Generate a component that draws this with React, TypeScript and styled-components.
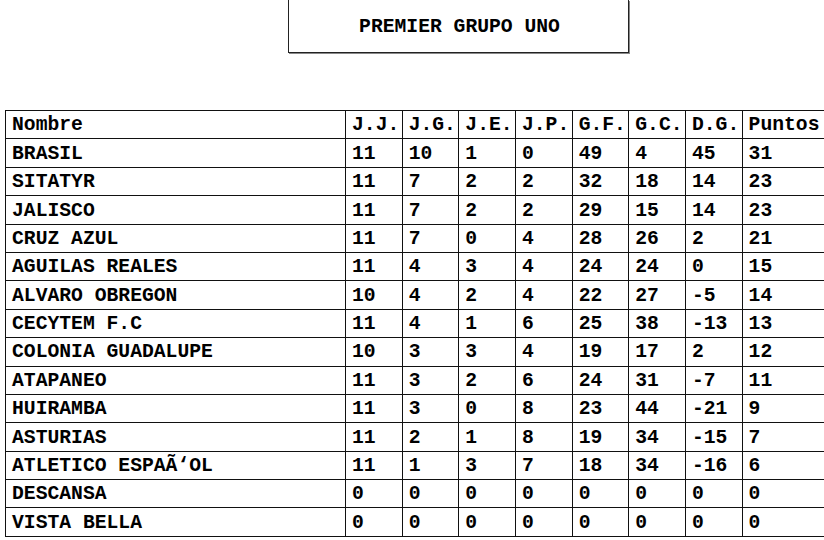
import React from "react";
import styled, { createGlobalStyle } from "styled-components";

const GlobalStyle = createGlobalStyle`
  html, body {
    margin: 0;
    padding: 0;
    background: #fff;
    overflow: hidden;
  }
  body {
    font-family: "Liberation Mono", "Courier New", monospace;
    color: #000;
  }
`;

const Page = styled.div`
  width: 824px;
  height: 540px;
  overflow: hidden;
`;

const TitleBox = styled.div`
  margin-left: 288px;
  width: 337px;
  height: 50px;
  padding: 2px 0 0 2px;
  border: 1px solid #222;
  border-top: none;
  box-shadow: 1px 1px 0 #888;
  display: flex;
  align-items: center;
  justify-content: center;
  font-weight: bold;
  font-size: 19.7px;
`;

const Table = styled.table`
  margin-top: 57px;
  margin-left: 5px;
  border-collapse: collapse;
  table-layout: fixed;
  width: 887px;
  font-size: 19.7px;
  font-weight: bold;
`;

const Cell = styled.td`
  border: 1px solid #111;
  height: 24.4px;
  padding: 3px 0 0 6px;
  white-space: nowrap;
  overflow: hidden;
  text-align: left;
  vertical-align: middle;
  line-height: 1;
  font-weight: bold;
`;

const columns = ["J.J.", "J.G.", "J.E.", "J.P.", "G.F.", "G.C.", "D.G.", "Puntos"];

type Team = [string, number, number, number, number, number, number, number, number];

const teams: Team[] = [
  ["BRASIL", 11, 10, 1, 0, 49, 4, 45, 31],
  ["SITATYR", 11, 7, 2, 2, 32, 18, 14, 23],
  ["JALISCO", 11, 7, 2, 2, 29, 15, 14, 23],
  ["CRUZ AZUL", 11, 7, 0, 4, 28, 26, 2, 21],
  ["AGUILAS REALES", 11, 4, 3, 4, 24, 24, 0, 15],
  ["ALVARO OBREGON", 10, 4, 2, 4, 22, 27, -5, 14],
  ["CECYTEM F.C", 11, 4, 1, 6, 25, 38, -13, 13],
  ["COLONIA GUADALUPE", 10, 3, 3, 4, 19, 17, 2, 12],
  ["ATAPANEO", 11, 3, 2, 6, 24, 31, -7, 11],
  ["HUIRAMBA", 11, 3, 0, 8, 23, 44, -21, 9],
  ["ASTURIAS", 11, 2, 1, 8, 19, 34, -15, 7],
  ["ATLETICO ESPAÃ\u2018OL", 11, 1, 3, 7, 18, 34, -16, 6],
  ["DESCANSA", 0, 0, 0, 0, 0, 0, 0, 0],
  ["VISTA BELLA", 0, 0, 0, 0, 0, 0, 0, 0],
];

export default function App() {
  return (
    <Page>
      <GlobalStyle />
      <TitleBox>PREMIER GRUPO UNO</TitleBox>
      <Table>
        <colgroup>
          <col style={{ width: 340 }} />
          {columns.slice(0, 7).map((c) => (
            <col key={c} style={{ width: 56.67 }} />
          ))}
          <col style={{ width: 150 }} />
        </colgroup>
        <thead>
          <tr>
            <Cell as="th">Nombre</Cell>
            {columns.map((c) => (
              <Cell as="th" key={c}>
                {c}
              </Cell>
            ))}
          </tr>
        </thead>
        <tbody>
          {teams.map((t) => (
            <tr key={t[0]}>
              {t.map((v, i) => (
                <Cell key={i}>{v}</Cell>
              ))}
            </tr>
          ))}
        </tbody>
      </Table>
    </Page>
  );
}
